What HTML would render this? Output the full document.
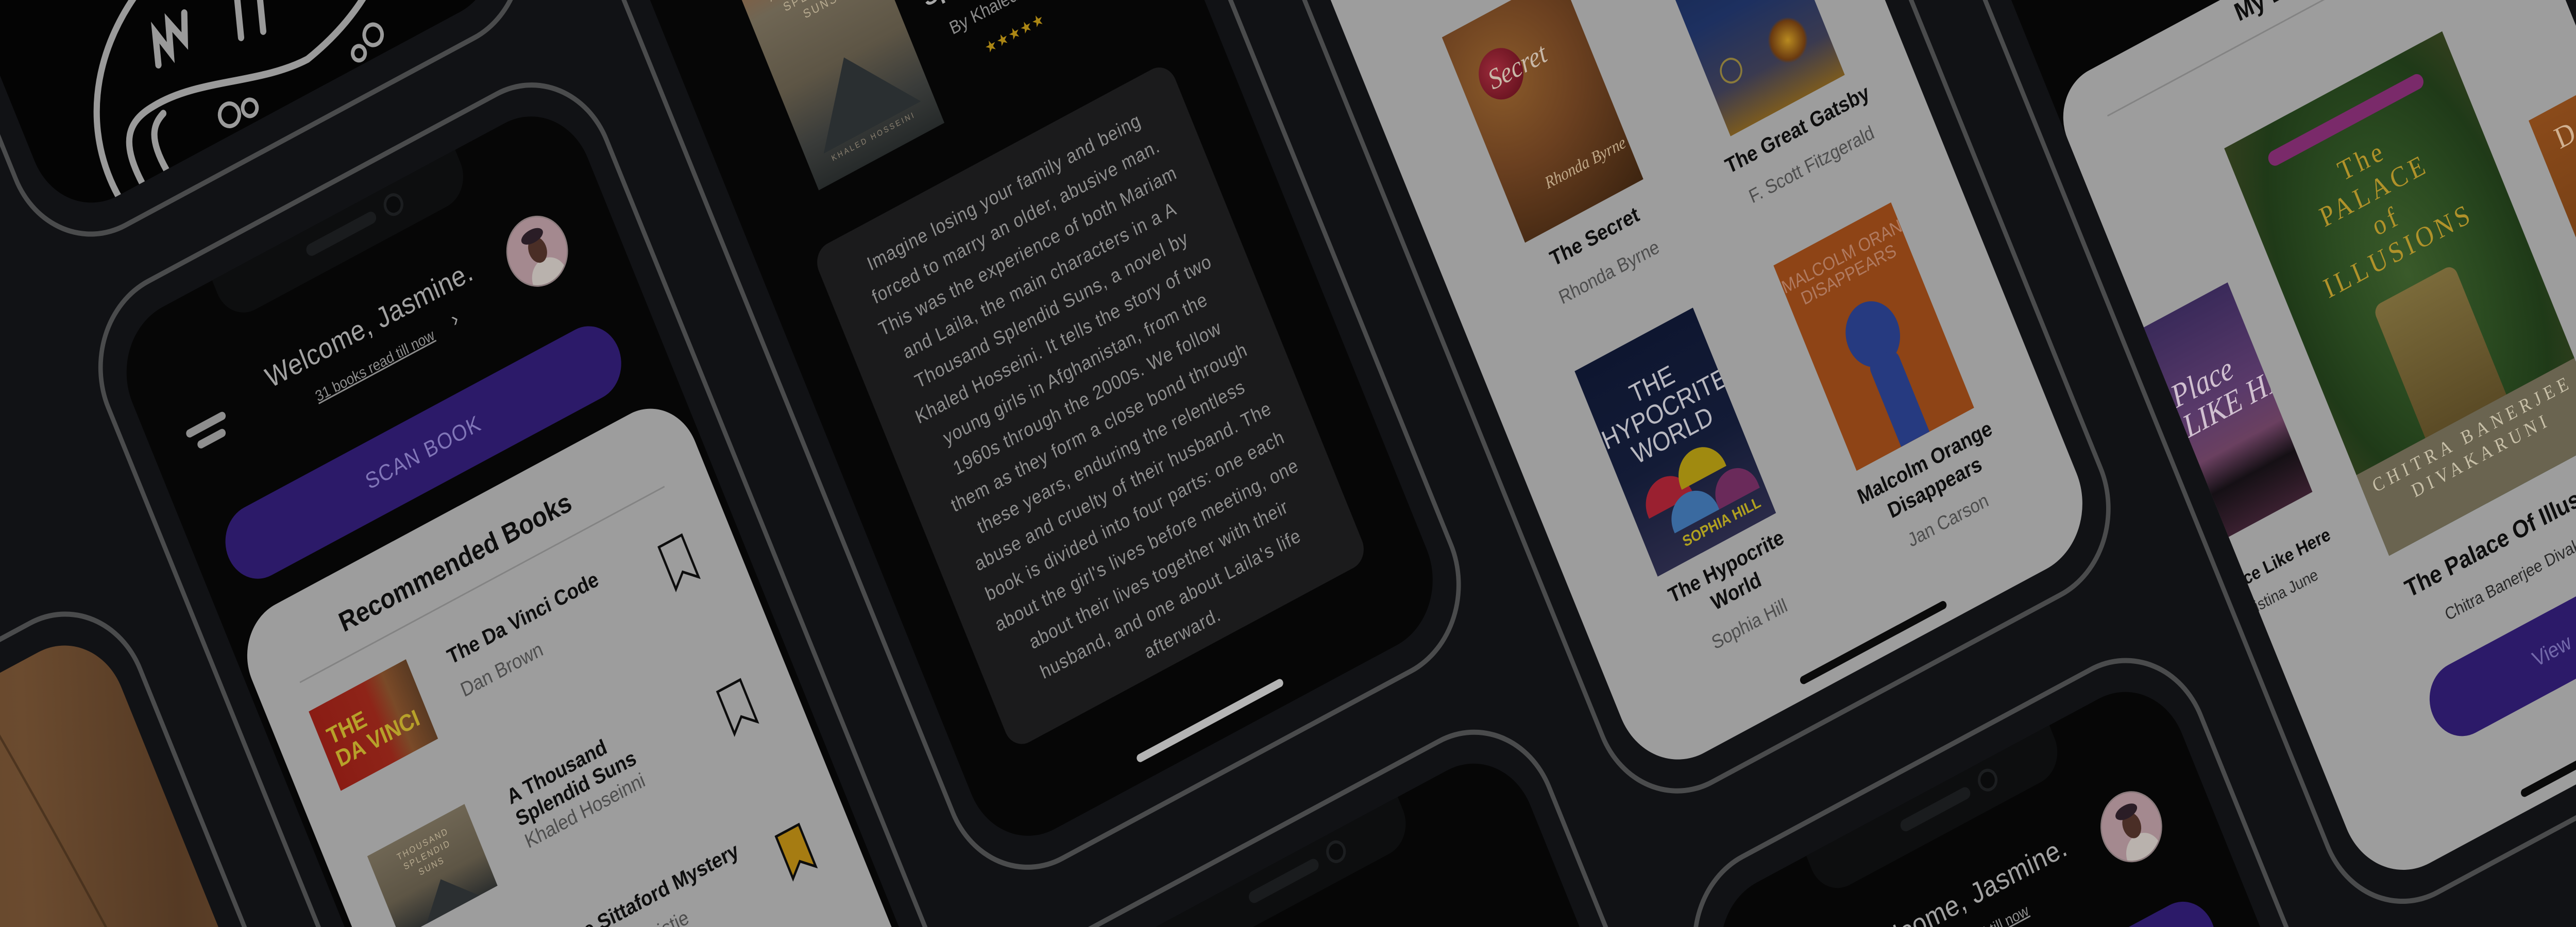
<!DOCTYPE html>
<html><head><meta charset="utf-8">
<meta name="viewport" content="width=device-width, initial-scale=1">
<style>
*{margin:0;padding:0;box-sizing:border-box}
html,body{width:100%;height:100%;overflow:hidden;background:#111215}
body{font-family:"Liberation Sans",sans-serif;position:relative}
#stage{position:fixed;left:0;top:0;width:100vw;height:100vh;display:block;overflow:hidden}
#wrap{position:absolute;left:0;top:0;width:5763px;height:1800px;overflow:hidden;background:#111215;font-family:"Liberation Sans",sans-serif}
#plane{position:absolute;left:0;top:0;width:0;height:0;transform-origin:0 0;transform:rotate(-25deg)}
.ph{position:absolute;width:1240px;height:2520px;border-radius:190px;background:#111215;box-shadow:inset 0 0 0 10px #4a4b4c}
.sc{position:absolute;left:58px;top:64px;width:1124px;height:2392px;border-radius:140px;background:#060606;overflow:hidden}
.notch{position:absolute;left:262px;top:-2px;width:600px;height:94px;background:#0d0e0f;border-radius:0 0 64px 64px;z-index:5}
.spk{position:absolute;left:215px;top:30px;width:170px;height:24px;border-radius:12px;background:#1a1c1e}
.cam{position:absolute;left:408px;top:18px;width:44px;height:44px;border-radius:50%;border:6px solid #1c1e20;background:#0a0b0c}
.t{position:absolute;white-space:nowrap;line-height:1}
.b{font-weight:bold}
.cv{position:absolute;overflow:hidden}
.home{position:absolute;height:16px;border-radius:8px}
</style></head><body>
<svg id="stage" viewBox="0 0 5763 1800" preserveAspectRatio="none">
<foreignObject x="0" y="0" width="5763" height="1800">
<div id="wrap">
<div id="plane">

<div class="ph" style="left:-1500px;top:1120px">
 <div class="sc" style="background:linear-gradient(112deg,#4a3120 0%,#5f432a 25%,#6b4b2f 45%,#553a24 62%,#6a4a2e 80%,#3e2a1a 100%)">
  <svg width="1124" height="2392" style="position:absolute;left:0;top:0" fill="none" stroke="#3a2716" stroke-width="5" opacity=".6">
   <path d="M100 0 C300 600 200 1200 420 2392"/><path d="M500 0 C650 700 560 1400 760 2392"/><path d="M820 0 C900 500 980 1200 1050 2392"/>
  </svg>
 </div>
</div>

<div class="ph" style="left:-120px;top:-2000px">
 <div class="sc" style="background:#040404">
  <svg width="1124" height="2392" style="position:absolute;left:0;top:0" fill="none" stroke="#9a9a9a" stroke-width="14" stroke-linecap="round">
   <path d="M142 2400 C120 2250 200 2120 353 2050"/>
   <path d="M200 2392 C190 2300 220 2270 286 2268 C400 2262 520 2330 637 2331 C700 2320 760 2300 811 2270 C880 2230 940 2180 1000 2150"/>
   <path d="M330 2200 l20 -60 l15 50 l20 -55 l18 48 l22 -50"/>
   <path d="M520 2230 l30 -90 M570 2240 l30 -90"/>
   <circle cx="433" cy="2355" r="22" stroke-width="8"/><circle cx="480" cy="2362" r="16" stroke-width="8"/>
   <circle cx="746" cy="2369" r="14" stroke-width="8"/><circle cx="790" cy="2350" r="20" stroke-width="8"/>
   <circle cx="700" cy="2200" r="22" stroke-width="8"/><circle cx="860" cy="2230" r="12" stroke-width="8"/>
   <path d="M650 2100 C700 2150 760 2170 820 2140"/>
   <path d="M260 2392 C250 2320 270 2300 300 2290"/>
  </svg>
 </div>
</div>

<div class="ph" style="left:-120px;top:630px">
 <div class="sc">
  <div class="notch"><div class="spk"></div><div class="cam"></div></div>
  <div style="position:absolute;left:83px;top:240px;width:96px;height:16px;border-radius:8px;background:#8e8e8e"></div>
  <div style="position:absolute;left:97px;top:270px;width:68px;height:16px;border-radius:8px;background:#8e8e8e"></div>
  <div class="t" style="left:292px;top:198px;font-size:56px;color:#a2a2a2;letter-spacing:1px">Welcome, Jasmine.</div>
  <div class="t" style="left:377px;top:290px;font-size:30px;color:#8d8d8d;text-decoration:underline">31 books read till now</div>
  <div class="t" style="left:715px;top:276px;font-size:42px;color:#a0a0a0">&#8250;</div>
  <div style="position:absolute;left:876px;top:187px;width:138px;height:138px;border-radius:50%;background:#a4898f;overflow:hidden;border:3px solid #8a7a7c">
   <div style="position:absolute;left:30px;top:85px;width:80px;height:60px;border-radius:40px 40px 0 0;background:#b9b2ad"></div>
   <div style="position:absolute;left:48px;top:38px;width:40px;height:52px;border-radius:50%;background:#4a2e26"></div>
   <div style="position:absolute;left:42px;top:22px;width:52px;height:26px;border-radius:50%;background:#2a1d26"></div>
  </div>
  <div style="position:absolute;left:68px;top:430px;width:962px;height:145px;border-radius:73px;background:#2c1a69;color:#8176b8;font-size:44px;letter-spacing:2px;text-align:center;line-height:145px">SCAN BOOK</div>
  <div style="position:absolute;left:15px;top:630px;width:1094px;height:1900px;border-radius:110px;background:#9d9d9d"></div>
  <div class="t b" style="left:240px;top:699px;font-size:54px;color:#0e0e0e">Recommended Books</div>
  <div style="position:absolute;left:110px;top:789px;width:900px;height:3px;background:#838383"></div>
  <div class="cv" style="left:104px;top:850px;width:240px;height:170px;background:linear-gradient(90deg,#8a1c14 0%,#8e2418 55%,#7a4a28 75%,#5a3a22 100%)">
   <div class="t b" style="left:18px;top:40px;font-size:46px;color:#b7a12a;line-height:1.05">THE<br>DA VINCI</div>
  </div>
  <div class="t b" style="left:431px;top:867px;font-size:42px;color:#0e0e0e">The Da Vinci Code</div>
  <div class="t" style="left:431px;top:939px;font-size:40px;color:#4d4d4d">Dan Brown</div>
  <svg style="position:absolute;left:945px;top:888px" width="66" height="100"><path d="M4 4 H60 V94 L32 70 L4 94 Z" fill="none" stroke="#0d0d0d" stroke-width="5"/></svg>
  <div class="cv" style="left:104px;top:1160px;width:240px;height:175px;background:linear-gradient(180deg,#6f6654 0%,#5d5545 60%,#2e302f 100%)">
   <div class="t" style="left:60px;top:20px;font-size:18px;color:#b8ab90;letter-spacing:3px;text-align:center;line-height:1.3">THOUSAND<br>SPLENDID<br>SUNS</div>
   <div style="position:absolute;left:60px;top:110px;width:0;height:0;border-left:70px solid transparent;border-right:70px solid transparent;border-bottom:70px solid #2b2f31"></div>
  </div>
  <div class="t b" style="left:437px;top:1167px;font-size:42px;color:#0e0e0e;line-height:1.12">A Thousand<br>Splendid Suns</div>
  <div class="t" style="left:437px;top:1266px;font-size:40px;color:#4d4d4d">Khaled Hoseinni</div>
  <svg style="position:absolute;left:945px;top:1198px" width="66" height="100"><path d="M4 4 H60 V94 L32 70 L4 94 Z" fill="none" stroke="#0d0d0d" stroke-width="5"/></svg>
  <div class="cv" style="left:104px;top:1470px;width:240px;height:175px;background:linear-gradient(180deg,#3a3530,#1e1c1a)"></div>
  <div class="t b" style="left:431px;top:1477px;font-size:42px;color:#0e0e0e">The Sittaford Mystery</div>
  <div class="t" style="left:431px;top:1549px;font-size:40px;color:#4d4d4d">Agatha Christie</div>
  <svg style="position:absolute;left:945px;top:1508px" width="66" height="100"><path d="M4 4 H60 V94 L32 70 L4 94 Z" fill="#a67c12" stroke="#0d0d0d" stroke-width="5"/></svg>
 </div>
</div>

<div class="ph" style="left:1260px;top:0px">
 <div class="sc">
  <div class="notch"><div class="spk"></div><div class="cam"></div></div>
  <div class="cv" style="left:186px;top:585px;width:310px;height:460px;background:linear-gradient(180deg,#8a5a3a 0%,#6f6654 22%,#5d5545 55%,#3a3c3a 80%,#262a2a 100%)">
   <div class="t" style="left:0;width:310px;top:60px;font-size:24px;color:#b8ab90;letter-spacing:4px;text-align:center;line-height:1.3">A THOUSAND<br>SPLENDID<br>SUNS</div>
   <div style="position:absolute;left:40px;top:250px;width:0;height:0;border-left:120px solid transparent;border-right:120px solid transparent;border-bottom:150px solid #2a2f31"></div>
   <div class="t" style="left:0;width:310px;top:410px;font-size:16px;color:#8a8070;letter-spacing:4px;text-align:center">KHALED HOSSEINI</div>
  </div>
  <div class="t b" style="left:555px;top:730px;font-size:48px;color:#a8a8a8;line-height:1.1">A Thousand<br>Splendid Suns</div>
  <div class="t" style="left:585px;top:868px;font-size:36px;color:#8a8a8a">By Khaled Hosseini</div>
  <div class="t" style="left:640px;top:940px;font-size:30px;color:#ab8614;letter-spacing:2px">&#9733;&#9733;&#9733;&#9733;&#9733;</div>
  <div style="position:absolute;left:120px;top:1147px;width:880px;height:1068px;border-radius:40px;background:#1b1b1c"></div>
  <div style="position:absolute;left:120px;top:1193px;width:880px;text-align:center;font-size:38px;line-height:63px;color:#8e8e8e;letter-spacing:1.5px">Imagine losing your family and being<br>forced to marry an older, abusive man.<br>This was the experience of both Mariam<br>and Laila, the main characters in a A<br>Thousand Splendid Suns, a novel by<br>Khaled Hosseini. It tells the story of two<br>young girls in Afghanistan, from the<br>1960s through the 2000s. We follow<br>them as they form a close bond through<br>these years, enduring the relentless<br>abuse and cruelty of their husband. The<br>book is divided into four parts: one each<br>about the girl's lives before meeting, one<br>about their lives together with their<br>husband, and one about Laila's life<br>afterward.</div>
  <div class="home" style="left:364px;top:2340px;width:360px;background:#b5b5b5"></div>
 </div>
</div>

<div class="ph" style="left:1260px;top:2660px">
 <div class="sc"><div class="notch"><div class="spk"></div><div class="cam"></div></div></div>
</div>

<div class="ph" style="left:2640px;top:480px">
 <div class="sc" style="background:#9d9d9d">
  <div class="cv" style="left:195px;top:885px;width:292px;height:440px;background:radial-gradient(circle at 30% 30%,#8a5a2a 0%,#6b4020 45%,#3d2410 100%)">
   <div style="position:absolute;left:40px;top:70px;width:100px;height:100px;border-radius:50%;background:radial-gradient(circle at 40% 40%,#9a2a3a,#5a0c18);"></div>
   <div class="t" style="left:60px;top:95px;font-size:56px;color:#c8b8a8;font-family:'Liberation Serif',serif;font-style:italic">Secret</div>
   <div class="t" style="left:90px;top:340px;font-size:34px;color:#c0a888;font-family:'Liberation Serif',serif;font-style:italic">Rhonda Byrne</div>
  </div>
  <div class="t b" style="left:41px;width:600px;text-align:center;top:1359px;font-size:42px;color:#0e0e0e">The Secret</div>
  <div class="t" style="left:41px;width:600px;text-align:center;top:1438px;font-size:38px;color:#4d4d4d">Rhonda Byrne</div>
  <div class="cv" style="left:699px;top:892px;width:282px;height:440px;background:linear-gradient(180deg,#15254a 0%,#1d3060 50%,#3a3a50 80%,#7a5a20 100%)">
   <div style="position:absolute;left:150px;top:280px;width:90px;height:90px;border-radius:50%;background:radial-gradient(circle,#b88a20,#6a3a10 60%,transparent 70%)"></div>
   <div style="position:absolute;left:30px;top:300px;width:50px;height:50px;border-radius:50%;border:4px solid #8a7a3a"></div>
  </div>
  <div class="t b" style="left:540px;width:600px;text-align:center;top:1362px;font-size:42px;color:#0e0e0e">The Great Gatsby</div>
  <div class="t" style="left:540px;width:600px;text-align:center;top:1440px;font-size:38px;color:#4d4d4d">F. Scott Fitzgerald</div>
  <div class="cv" style="left:190px;top:1598px;width:292px;height:440px;background:linear-gradient(180deg,#0e1630 0%,#131b36 55%,#2a2a48 100%)">
   <div class="t" style="left:0;width:292px;top:70px;font-size:52px;color:#b8b8c0;text-align:center;line-height:1.05">THE<br>HYPOCRITE<br>WORLD</div>
   <div style="position:absolute;left:30px;top:270px;width:110px;height:60px;border-radius:60px 60px 0 0;background:#9a2030"></div>
   <div style="position:absolute;left:120px;top:250px;width:110px;height:60px;border-radius:60px 60px 0 0;background:#a08a10"></div>
   <div style="position:absolute;left:70px;top:320px;width:110px;height:60px;border-radius:60px 60px 0 0;background:#3a6aa0"></div>
   <div style="position:absolute;left:180px;top:320px;width:100px;height:60px;border-radius:60px 60px 0 0;background:#6a2a5a"></div>
   <div class="t b" style="left:80px;top:390px;font-size:30px;color:#b0a020">SOPHIA HILL</div>
  </div>
  <div class="t b" style="left:37px;width:600px;text-align:center;top:2059px;font-size:42px;color:#0e0e0e;line-height:1.25">The Hypocrite<br>World</div>
  <div class="t" style="left:37px;width:600px;text-align:center;top:2190px;font-size:38px;color:#4d4d4d">Sophia Hill</div>
  <div class="cv" style="left:680px;top:1600px;width:290px;height:440px;background:#8e4416">
   <div class="t" style="left:0;width:290px;top:30px;font-size:36px;color:#b07a60;text-align:center;line-height:1.05">MALCOLM ORANGE<br>DISAPPEARS</div>
   <div style="position:absolute;left:85px;top:150px;width:120px;height:130px;border-radius:50%;background:#263a80"></div>
   <div style="position:absolute;left:110px;top:260px;width:70px;height:180px;background:#263a80;border-radius:20px 20px 0 0"></div>
  </div>
  <div class="t b" style="left:525px;width:600px;text-align:center;top:2064px;font-size:42px;color:#0e0e0e;line-height:1.25">Malcolm Orange<br>Disappears</div>
  <div class="t" style="left:525px;width:600px;text-align:center;top:2195px;font-size:38px;color:#4d4d4d">Jan Carson</div>
  <div class="home" style="left:393px;top:2350px;width:360px;background:#0a0a0a"></div>
 </div>
</div>

<div class="ph" style="left:2640px;top:3150px">
 <div class="sc">
  <div class="notch"><div class="spk"></div><div class="cam"></div></div>
  <div style="position:absolute;left:83px;top:240px;width:96px;height:16px;border-radius:8px;background:#8e8e8e"></div>
  <div style="position:absolute;left:97px;top:270px;width:68px;height:16px;border-radius:8px;background:#8e8e8e"></div>
  <div class="t" style="left:292px;top:198px;font-size:56px;color:#a2a2a2;letter-spacing:1px">Welcome, Jasmine.</div>
  <div class="t" style="left:377px;top:290px;font-size:30px;color:#8d8d8d;text-decoration:underline">31 books read till now</div>
  <div style="position:absolute;left:876px;top:187px;width:138px;height:138px;border-radius:50%;background:#a4898f;overflow:hidden;border:3px solid #8a7a7c">
   <div style="position:absolute;left:30px;top:85px;width:80px;height:60px;border-radius:40px 40px 0 0;background:#b9b2ad"></div>
   <div style="position:absolute;left:48px;top:38px;width:40px;height:52px;border-radius:50%;background:#4a2e26"></div>
   <div style="position:absolute;left:42px;top:22px;width:52px;height:26px;border-radius:50%;background:#2a1d26"></div>
  </div>
  <div style="position:absolute;left:68px;top:430px;width:962px;height:145px;border-radius:73px;background:#2c1a69;color:#8176b8;font-size:44px;letter-spacing:2px;text-align:center;line-height:145px">SCAN BOOK</div>
 </div>
</div>

<div class="ph" style="left:4020px;top:1360px">
 <div class="sc">
  <div class="notch"><div class="spk"></div><div class="cam"></div></div>
  <div style="position:absolute;left:0;top:675px;width:1124px;height:1800px;border-radius:100px 100px 0 0;background:#9d9d9d"></div>
  <div class="t b" style="left:262px;width:600px;text-align:center;top:689px;font-size:50px;color:#0e0e0e">My Books</div>
  <div style="position:absolute;left:100px;top:771px;width:924px;height:3px;background:#838383"></div>
  <div class="cv" style="left:-90px;top:1179px;width:297px;height:449px;background:linear-gradient(180deg,#3a2a5a 0%,#5a3a6a 45%,#6a4060 65%,#151015 80%,#3a2030 100%)">
   <div class="t" style="left:90px;top:120px;font-size:64px;color:#d0c0d0;font-family:'Liberation Serif',serif;font-style:italic;line-height:1">Place<br>LIKE HERE</div>
  </div>
  <div class="t b" style="left:-243px;width:600px;text-align:center;top:1699px;font-size:36px;color:#0e0e0e">A Place Like Here</div>
  <div class="t" style="left:-243px;width:600px;text-align:center;top:1760px;font-size:32px;color:#2a2a2a">Kristina June</div>
  <div class="cv" style="left:310px;top:940px;width:538px;height:873px;background:radial-gradient(ellipse at 50% 45%,#3a5a2a 0%,#2a4a20 40%,#1f3a18 70%,#3a4020 100%)">
   <div style="position:absolute;left:80px;top:50px;width:380px;height:30px;border-radius:15px;background:#7a2a6a"></div>
   <div class="t" style="left:0;width:538px;top:120px;font-size:56px;color:#b0922a;text-align:center;font-family:'Liberation Serif',serif;letter-spacing:8px;line-height:1.15">The<br>PALACE<br>of<br>ILLUSIONS</div>
   <div style="position:absolute;left:170px;top:420px;width:200px;height:290px;border-radius:20px 20px 0 0;background:linear-gradient(180deg,#7a6a3a,#5a4a25)"></div>
   <div style="position:absolute;left:0;top:700px;width:538px;height:173px;background:#6a6450"></div>
   <div class="t" style="left:0;width:538px;top:715px;font-size:38px;color:#c8c0a8;text-align:center;font-family:'Liberation Serif',serif;letter-spacing:10px;line-height:1.2">CHITRA BANERJEE<br>DIVAKARUNI</div>
  </div>
  <div class="t b" style="left:279px;width:600px;text-align:center;top:1867px;font-size:48px;color:#0e0e0e">The Palace Of Illusions</div>
  <div class="t" style="left:279px;width:600px;text-align:center;top:1955px;font-size:34px;color:#2a2a2a">Chitra Banerjee Divakaruni</div>
  <div class="cv" style="left:950px;top:1179px;width:300px;height:449px;background:linear-gradient(180deg,#8a4a1a,#6a3a12)">
   <div class="t" style="left:40px;top:30px;font-size:60px;color:#d0b090;font-family:'Liberation Serif',serif">DA</div>
  </div>
  <div style="position:absolute;left:268px;top:2061px;width:588px;height:145px;border-radius:73px;background:#2c1a69;color:#7369ab;font-size:42px;text-align:center;line-height:145px">View</div>
  <div class="home" style="left:382px;top:2350px;width:360px;background:#0a0a0a"></div>
 </div>
</div>

</div>
</div>
</foreignObject>
</svg>
</body></html>
